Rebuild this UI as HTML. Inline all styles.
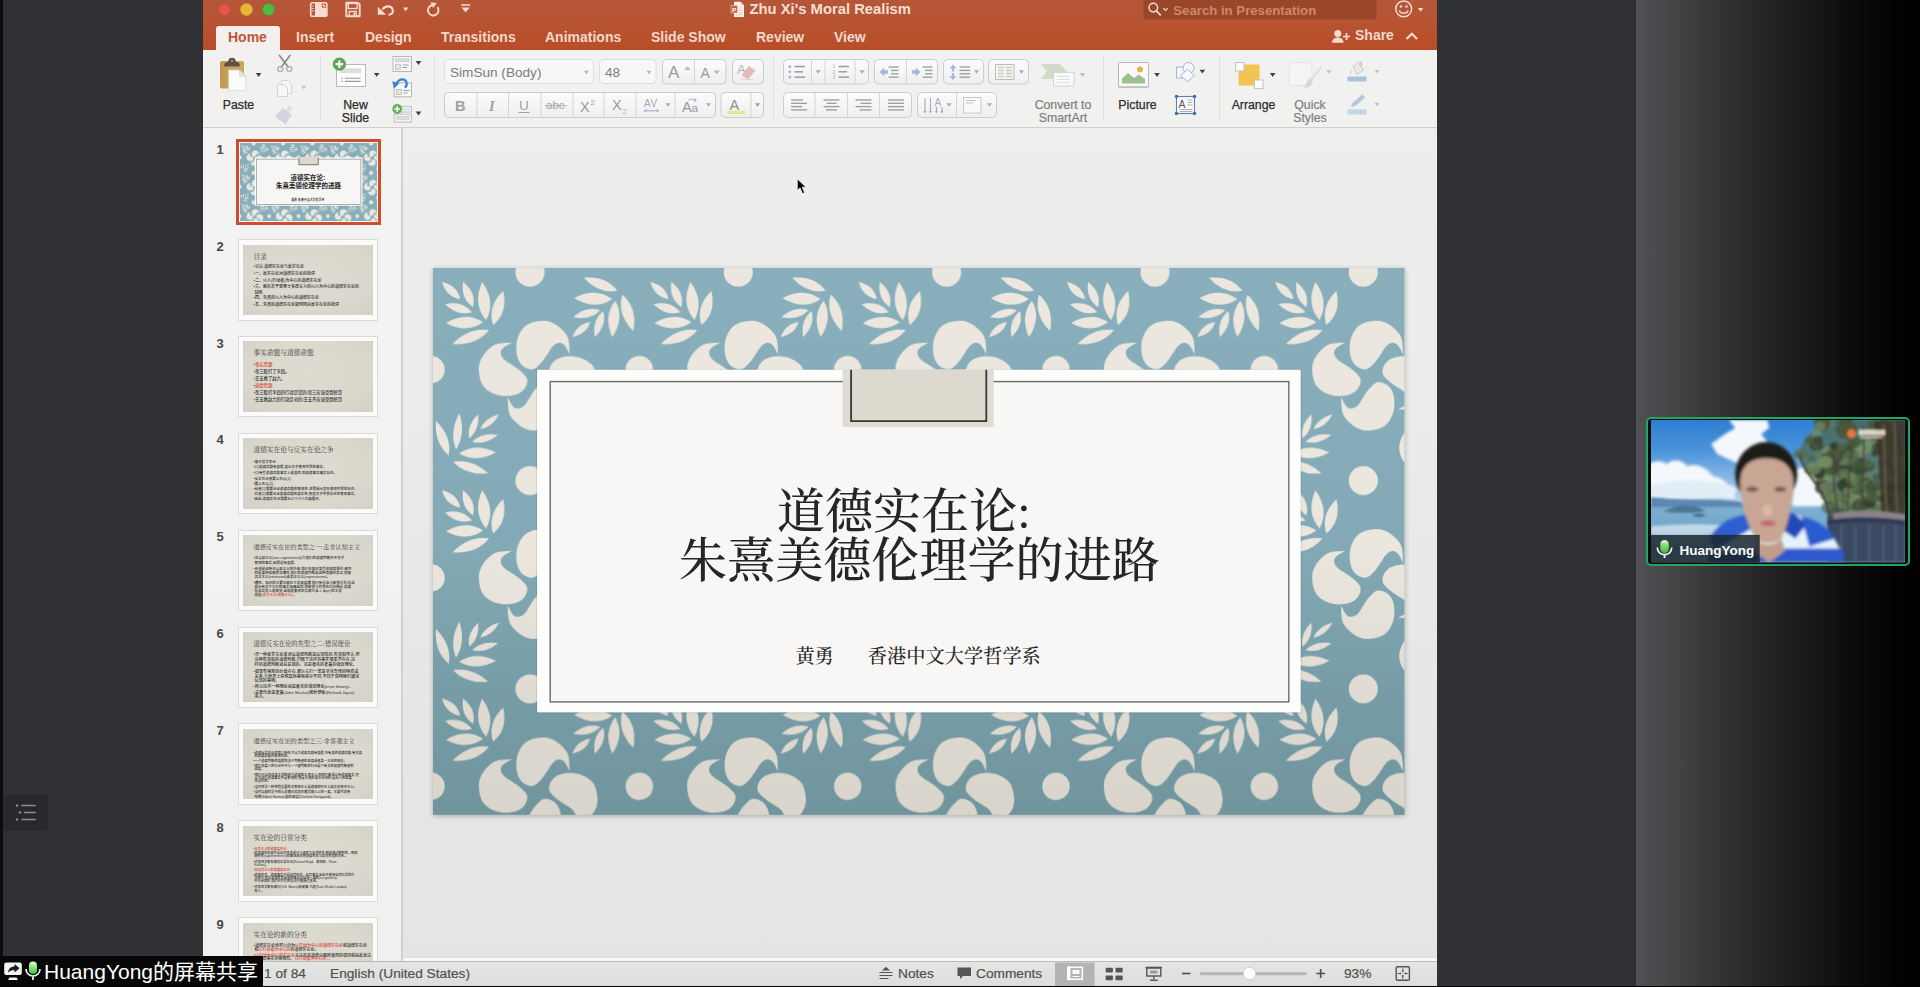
<!DOCTYPE html>
<html lang="zh"><head><meta charset="utf-8"><title>Zhu Xi's Moral Realism</title>
<style>

*{box-sizing:border-box;margin:0;padding:0}
html,body{width:1920px;height:987px;overflow:hidden;background:#2f3134;font-family:"Liberation Sans","Noto Sans CJK SC",sans-serif;}
.a{position:absolute}
#leftbg{position:absolute;left:0;top:0;width:3px;height:987px;background:#0c0c0d}
#rightbg{position:absolute;left:1635.5px;top:0;width:284.5px;height:987px;background:linear-gradient(90deg,#505154 0%,#424345 15.5%,#323234 30.6%,#242425 46%,#181818 61%,#0c0c0c 76%,#020202 92%,#000 100%)}
#ppt{position:absolute;left:0;top:0;width:1920px;height:987px}
#win{position:absolute;left:202.6px;top:0;width:1234.1px;height:987px;background:#ececec}
#tbar{position:absolute;left:202.6px;top:0;width:1234.1px;height:50px;background:linear-gradient(180deg,#b5573a 0%,#b7522f 55%,#b94d29 100%)}
.tl{position:absolute;top:3px;width:13px;height:13px;border-radius:50%}
#title{position:absolute;left:749.5px;top:1px;font-weight:bold;font-size:14.8px;color:#f6dfd5;letter-spacing:0px;white-space:nowrap}
.tab{position:absolute;top:29px;font-weight:bold;font-size:14px;color:#f3d8cc;white-space:nowrap}
#hometab{position:absolute;left:216px;top:26px;width:64px;height:25px;background:#f3f0ee;border-radius:3px 3px 0 0}
#ribbon{position:absolute;left:202.6px;top:49.5px;width:1234.1px;height:78.5px;background:#f1f1f0;border-bottom:1px solid #cfcfcf;box-shadow:0 1px 2px rgba(0,0,0,.08)}
.rl{position:absolute;font-size:12.3px;margin-top:0.7px;color:#2c2c2c;white-space:nowrap;text-align:center;line-height:13px;-webkit-text-stroke:0.25px #2c2c2c}
.rlg{color:#7d7d7d;-webkit-text-stroke:0.2px #7d7d7d}
.vsep{position:absolute;top:56px;width:1px;height:64px;background:#dcdcdc}
.btn{position:absolute;background:linear-gradient(180deg,#fbfbfb,#efefef);border:1px solid #cfcfcf;border-radius:4px}
.bdv{position:absolute;width:1px;background:#d4d4d4;top:0;bottom:0}
.inp{position:absolute;background:#f7f7f7;border:1px solid #dedede;border-radius:4px;font-size:13px;color:#7a7a7a;line-height:22px;padding-left:5px;white-space:nowrap}
.dd{position:absolute;width:0;height:0;border-left:3.5px solid transparent;border-right:3.5px solid transparent;border-top:5px solid #3a3a3a}
.ddg{border-top-color:#aaa}
#panel{position:absolute;left:202.6px;top:128px;width:198.4px;height:834px;background:linear-gradient(180deg,#f3f3f3,#f0f0ef)}
#pdiv{position:absolute;left:400.5px;top:128px;width:2px;height:834px;background:#d0d0d0}
.num{position:absolute;left:212px;width:16px;text-align:center;font-weight:bold;font-size:13px;color:#484848}
.thf{position:absolute;left:238.3px;width:140px;height:81.6px;background:#fbfbfb;border:1px solid #d9d9d9}
.ths{position:absolute;left:4.2px;top:4.6px;width:129.4px;height:70.4px;background:radial-gradient(ellipse at 50% 45%,#dedbd1 0%,#dbd8ce 60%,#d3d0c7 100%);overflow:hidden;font-family:"Liberation Serif","Noto Serif CJK SC",serif;color:#2a2a2a}
.tht{position:absolute;left:10px;top:7px;line-height:10px;font-size:6.7px;white-space:nowrap;color:#3a3a3a}
.thb{position:absolute;left:10px;font-size:3.6px;line-height:6px;height:6px;color:#2b2b2b;white-space:nowrap;font-family:"Liberation Sans","Noto Sans CJK SC",sans-serif;font-weight:500}
.red{color:#d9362b}
#stage{position:absolute;left:402.5px;top:128px;width:1034.2px;height:834px;background:linear-gradient(180deg,#eeeeed 0%,#ececeb 30%,#e6e6e4 75%,#e4e4e2 100%)}
#status{position:absolute;left:202.6px;top:960.5px;width:1234.1px;height:25.3px;background:linear-gradient(180deg,#e5e5e4,#dddddc);border-top:1px solid #b9b9b9;border-radius:0 0 4px 4px}
.st{position:absolute;top:966px;font-size:13.7px;line-height:16px;color:#505050;white-space:nowrap;-webkit-text-stroke:0.2px #505050}

</style></head>
<body>
<svg width="0" height="0" style="position:absolute"><defs>
<pattern id="pat" width="208" height="208" patternUnits="userSpaceOnUse"><g fill="#ebe7de">
<path d="M9.0 14.0Q13.4 29.2 27.0 31.0Q24.4 17.5 9.0 14.0ZM30.0 14.0Q27.6 30.9 40.0 39.0Q43.4 24.6 30.0 14.0ZM49.0 14.0Q39.3 36.2 53.0 52.0Q63.1 33.6 49.0 14.0ZM70.0 23.0Q53.9 38.6 60.0 57.0Q75.1 44.8 70.0 23.0ZM12.0 36.0Q24.4 48.5 39.0 44.0Q29.3 32.3 12.0 36.0ZM13.0 55.0Q33.7 65.9 50.0 54.0Q33.0 43.0 13.0 55.0ZM19.5 76.0Q43.2 77.6 56.0 62.0Q36.0 59.0 19.5 76.0Z"/>
<path d="M150.6 9.7Q165.3 26.2 184.0 22.7Q172.6 7.5 150.6 9.7ZM141.0 30.0Q161.6 42.5 179.0 31.0Q162.2 18.6 141.0 30.0ZM140.0 49.0Q156.9 52.9 167.0 42.0Q152.8 37.4 140.0 49.0ZM139.0 69.0Q153.4 66.1 157.0 54.0Q144.4 55.4 139.0 69.0ZM161.5 69.0Q173.8 57.2 170.0 43.0Q158.6 52.2 161.5 69.0ZM179.0 69.0Q191.6 49.8 182.0 32.5Q169.7 48.0 179.0 69.0ZM200.0 63.0Q204.5 39.8 189.0 26.5Q183.4 46.1 200.0 63.0Z"/>
<path d="M3.0 152.4Q1.1 174.7 15.8 187.0Q18.9 168.1 3.0 152.4ZM26.3 145.0Q16.0 164.0 23.0 181.0Q32.9 165.6 26.3 145.0ZM45.0 146.0Q33.5 156.7 36.0 170.0Q46.6 161.7 45.0 146.0ZM66.0 146.0Q51.8 149.5 47.0 161.0Q59.3 159.0 66.0 146.0ZM65.0 166.5Q48.9 163.6 39.0 173.5Q52.5 177.1 65.0 166.5ZM63.0 184.0Q42.4 174.1 26.0 185.0Q42.9 195.0 63.0 184.0ZM55.0 205.0Q38.6 190.1 20.0 193.5Q32.9 207.2 55.0 205.0Z"/>
<path d="M140.0 161.0Q126.7 178.2 137.5 194.0Q150.6 180.1 140.0 161.0Z"/>
<path transform="translate(105.5 107.5) rotate(0)" d="M31.0 -21.5C30.6 -24.5 31.2 -34.3 28.5 -39.5C25.8 -44.7 19.2 -50.0 14.5 -52.5C9.8 -55.0 5.2 -55.0 0.5 -54.5C-4.2 -54.0 -9.8 -52.7 -13.5 -49.5C-17.2 -46.3 -20.2 -40.5 -21.5 -35.5C-22.8 -30.5 -22.5 -23.8 -21.5 -19.5C-20.5 -15.2 -18.2 -11.7 -15.5 -9.5C-12.8 -7.3 -8.6 -5.9 -5.5 -6.5C-2.5 -7.1 0.5 -10.8 2.8 -13.2C5.1 -15.6 6.7 -18.4 8.3 -20.8C9.9 -23.2 11.1 -25.7 12.5 -27.5C13.9 -29.3 15.3 -30.8 16.9 -31.7C18.5 -32.6 20.7 -33.1 22.3 -32.7C23.9 -32.3 25.1 -31.4 26.5 -29.5C27.9 -27.6 30.2 -22.8 31.0 -21.5Z"/>
<path transform="translate(100.5 105.5) rotate(-90)" d="M31.0 -21.5C30.6 -24.5 31.2 -34.3 28.5 -39.5C25.8 -44.7 19.2 -50.0 14.5 -52.5C9.8 -55.0 5.2 -55.0 0.5 -54.5C-4.2 -54.0 -9.8 -52.7 -13.5 -49.5C-17.2 -46.3 -20.2 -40.5 -21.5 -35.5C-22.8 -30.5 -22.5 -23.8 -21.5 -19.5C-20.5 -15.2 -18.2 -11.7 -15.5 -9.5C-12.8 -7.3 -8.6 -5.9 -5.5 -6.5C-2.5 -7.1 0.5 -10.8 2.8 -13.2C5.1 -15.6 6.7 -18.4 8.3 -20.8C9.9 -23.2 11.1 -25.7 12.5 -27.5C13.9 -29.3 15.3 -30.8 16.9 -31.7C18.5 -32.6 20.7 -33.1 22.3 -32.7C23.9 -32.3 25.1 -31.4 26.5 -29.5C27.9 -27.6 30.2 -22.8 31.0 -21.5Z"/>
<path transform="translate(105.5 107.5) rotate(180)" d="M31.0 -21.5C30.6 -24.5 31.2 -34.3 28.5 -39.5C25.8 -44.7 19.2 -50.0 14.5 -52.5C9.8 -55.0 5.2 -55.0 0.5 -54.5C-4.2 -54.0 -9.8 -52.7 -13.5 -49.5C-17.2 -46.3 -20.2 -40.5 -21.5 -35.5C-22.8 -30.5 -22.5 -23.8 -21.5 -19.5C-20.5 -15.2 -18.2 -11.7 -15.5 -9.5C-12.8 -7.3 -8.6 -5.9 -5.5 -6.5C-2.5 -7.1 0.5 -10.8 2.8 -13.2C5.1 -15.6 6.7 -18.4 8.3 -20.8C9.9 -23.2 11.1 -25.7 12.5 -27.5C13.9 -29.3 15.3 -30.8 16.9 -31.7C18.5 -32.6 20.7 -33.1 22.3 -32.7C23.9 -32.3 25.1 -31.4 26.5 -29.5C27.9 -27.6 30.2 -22.8 31.0 -21.5Z"/>
<path transform="translate(109.5 110.5) rotate(90)" d="M31.0 -21.5C30.6 -24.5 31.2 -34.3 28.5 -39.5C25.8 -44.7 19.2 -50.0 14.5 -52.5C9.8 -55.0 5.2 -55.0 0.5 -54.5C-4.2 -54.0 -9.8 -52.7 -13.5 -49.5C-17.2 -46.3 -20.2 -40.5 -21.5 -35.5C-22.8 -30.5 -22.5 -23.8 -21.5 -19.5C-20.5 -15.2 -18.2 -11.7 -15.5 -9.5C-12.8 -7.3 -8.6 -5.9 -5.5 -6.5C-2.5 -7.1 0.5 -10.8 2.8 -13.2C5.1 -15.6 6.7 -18.4 8.3 -20.8C9.9 -23.2 11.1 -25.7 12.5 -27.5C13.9 -29.3 15.3 -30.8 16.9 -31.7C18.5 -32.6 20.7 -33.1 22.3 -32.7C23.9 -32.3 25.1 -31.4 26.5 -29.5C27.9 -27.6 30.2 -22.8 31.0 -21.5Z"/>
<circle cx="96.8" cy="4.2" r="14.5"/>
<circle cx="96.8" cy="212.2" r="14.5"/>
<circle cx="206.0" cy="101.5" r="13.7"/>
<circle cx="-2.0" cy="101.5" r="13.7"/>
</g></pattern>
</defs></svg>
<div id="leftbg"></div>
<div id="rightbg"></div>
<div id="ppt">

<div id="win"></div>
<div id="tbar"></div>
<div class="tl" style="left:218px;background:#e2574b;border:0.5px solid #c9463b"></div>
<div class="tl" style="left:240px;background:#e9b43a;border:0.5px solid #cf9a2b"></div>
<div class="tl" style="left:262px;background:#55b845;border:0.5px solid #3f9c33"></div>
<div id="title">Zhu Xi's Moral Realism</div>
<svg class="a" style="left:203px;top:0" width="1233" height="50" viewBox="203 0 1233 50">
<rect x="310.700" y="2.800" width="16.200" height="13.400" rx="1.800" fill="none" stroke="#f6dbd0" stroke-width="1.600"/>
<path d="M315 3h7.500l4 4v9h-11.500z" fill="#f6dbd0"/><path d="M322.300 3.200v4h4" fill="none" stroke="#b7532f" stroke-width="1"/>
<path d="M311.800 6h2M311.800 8.500h2M311.800 11h2" stroke="#f6dbd0" stroke-width="0.900"/>
<path d="M346.300 2.800h11.800l1.600 1.600v11.800h-13.400z" fill="none" stroke="#f6dbd0" stroke-width="1.900" stroke-linejoin="round"/>
<rect x="348.300" y="3.500" width="8.800" height="5" fill="none" stroke="#f6dbd0" stroke-width="1.300"/><path d="M349.300 16v-4.500h7v4.500" fill="none" stroke="#f6dbd0" stroke-width="1.400"/><rect x="353.300" y="12.600" width="2" height="3" fill="#f6dbd0"/>
<path d="M382.500 9.500c2.500-4.300 9.500-4.300 10.300 0.800c0.400 2.800-1.500 4.300-4.300 4.500" fill="none" stroke="#f6dbd0" stroke-width="2.100"/><path d="M377.800 6.800v8h8.300z" fill="#f6dbd0"/>
<path d="M403.0 7.6h5.4l-2.7 3.6z" fill="#f6dbd0"/>
<path d="M433.800 5.200a5.300 5.300 0 1 0 4.400 3.300" fill="none" stroke="#f6dbd0" stroke-width="1.900" transform="rotate(-14 432.300 10.500)"/><path d="M430.500 2.300l6.300 0.600l-3.700 5z" fill="#f6dbd0"/>
<path d="M461 5h9.200" stroke="#f6dbd0" stroke-width="1.500"/><path d="M461.4 7.6h8.4l-4.2 4.6z" fill="#f6dbd0"/>
<path d="M734 1.800h6.500l3.500 3.500v11.700h-10z" fill="#fbf3ee"/><path d="M740.500 1.800v3.500h3.500z" fill="#e9cdbf"/><rect x="731" y="5.500" width="6.500" height="7.500" fill="#cc5a36" stroke="#f6dbd0" stroke-width="0.500"/><path d="M738.500 8h4M738.500 10.500h4M738.500 13h4M735.500 15h7" stroke="#d9b9a9" stroke-width="0.800"/>
<text x="732.300" y="11.800" font-family="'Liberation Sans',sans-serif" font-size="6" font-weight="bold" fill="#fff">P</text>
<rect x="1143.500" y="-3" width="233" height="22.500" rx="3.500" fill="#974528" opacity="0.900"/>
<circle cx="1153.300" cy="7.600" r="4.300" fill="none" stroke="#f6dbd0" stroke-width="1.500"/><path d="M1156.300 10.900l4.400 4.400" stroke="#f6dbd0" stroke-width="1.700"/><path d="M1163.300 8.200l2.200 2.200l2.200-2.200" fill="none" stroke="#f6dbd0" stroke-width="1.200"/>
<text x="1173.300" y="14.700" font-family="'Liberation Sans',sans-serif" font-size="13.200" font-weight="bold" fill="#cf886b">Search in Presentation</text>
<circle cx="1403.700" cy="8.900" r="7.900" fill="none" stroke="#f6dbd0" stroke-width="1.500"/><circle cx="1400.900" cy="6.500" r="1.200" fill="#f6dbd0"/><circle cx="1406.500" cy="6.500" r="1.200" fill="#f6dbd0"/><path d="M1399.200 10.500c1.500 3.700 7.500 3.700 9 0" fill="none" stroke="#f6dbd0" stroke-width="1.400"/>
<path d="M1417.9 7.9h5.4l-2.7 3.6z" fill="#f6dbd0"/>
<circle cx="1337.800" cy="33.500" r="3.500" fill="#f6dbd0"/><path d="M1332 42.800c0-7 11.600-7 11.600 0z" fill="#f6dbd0"/><path d="M1346.500 33v7M1343 36.500h7" stroke="#f6dbd0" stroke-width="1.700"/>
<path d="M1406.500 39l5.300-5.300l5.300 5.300" fill="none" stroke="#f6dbd0" stroke-width="2.200"/>
</svg>

<div id="hometab"></div>
<div class="tab" style="left:228px;color:#c25338">Home</div>
<div class="tab" style="left:296px">Insert</div>
<div class="tab" style="left:365px">Design</div>
<div class="tab" style="left:441px">Transitions</div>
<div class="tab" style="left:545px">Animations</div>
<div class="tab" style="left:651px">Slide Show</div>
<div class="tab" style="left:756px">Review</div>
<div class="tab" style="left:834px">View</div>
<div class="tab" style="left:1355px;top:27px">Share</div>

<div id="ribbon"></div><svg class="a" style="left:203px;top:50px" width="1233" height="78" viewBox="203 50 1233 78">
<defs><linearGradient id="bg1" x1="0" y1="0" x2="0" y2="1"><stop offset="0" stop-color="#fcfcfc"/><stop offset="1" stop-color="#eeeeee"/></linearGradient><linearGradient id="gold" x1="0" y1="0" x2="1" y2="0"><stop offset="0" stop-color="#c3954f"/><stop offset="0.5" stop-color="#cda65f"/><stop offset="1" stop-color="#c9a461"/></linearGradient></defs>
<rect x="220" y="61" width="24" height="27.5" rx="2" fill="url(#gold)"/>
<path d="M224.5 66.5c-1-3 1-4.5 3.5-4.5c0-2.8 1.8-4.3 4-4.3s4 1.500 4 4.300c2.500 0 4.500 1.500 3.500 4.500z" fill="#5e514c"/><circle cx="232" cy="60.800" r="1.100" fill="#c9a05c"/>
<path d="M228.500 70h11l6.300 6.300v14.300h-17.300z" fill="#fbfbfa" stroke="#cfcfcf" stroke-width="0.600"/><path d="M239.500 70v6.300h6.300z" fill="#e4e4e4" stroke="#cfcfcf" stroke-width="0.500"/>
<path d="M255.8 73.1h5.6l-2.8 3.8z" fill="#404040"/>
<g stroke="#8b8b8b" stroke-width="1.700" fill="none" stroke-linecap="round"><path d="M279.500 55.500L288.300 67.200"/><path d="M290 55.500L281.200 67.200"/></g>
<g stroke="#b3b5c6" stroke-width="1.500" fill="none"><circle cx="280.300" cy="69" r="2.500"/><circle cx="289.300" cy="69" r="2.500"/></g>
<g fill="#f6f6f6" stroke="#d4d4d4" stroke-width="1"><path d="M281.500 80.500h6.500l3.500 3.500v9.500h-10z"/><path d="M277.500 84.500h6.500l3.500 3.500v8.500h-10z"/></g>
<path d="M301.1 85.9h5.4l-2.7 3.6z" fill="#c4c4c4"/>
<g transform="rotate(38 285 114)"><rect x="283" y="104" width="4.500" height="7" rx="1.200" fill="#e0e0e0"/><rect x="279.500" y="110.500" width="11.500" height="3.500" fill="#d6d6da"/><path d="M279.500 114h11.500l1 8h-13.500z" fill="#d2d2e2"/></g>
<path d="M320.500 56V120" stroke="#e2e2e2"/>
<rect x="336.500" y="64.500" width="29" height="22" fill="#fcfcfc" stroke="#b9b9b9"/>
<rect x="340.500" y="68.300" width="20.500" height="4.800" fill="#d9dee1"/>
<path d="M345 78.200h15.500M345 81.400h15.500" stroke="#9a9a9a" stroke-width="1.100"/><path d="M341.200 78.200h1.600M341.200 81.400h1.600" stroke="#9a9a9a" stroke-width="1.100"/>
<circle cx="339.400" cy="64.200" r="6.600" fill="#5da655"/><path d="M339.400 60.400v7.600M335.600 64.200h7.600" stroke="#f4faf3" stroke-width="2.200"/>
<path d="M373.9 72.9h5.6l-2.8 3.8z" fill="#404040"/>
<rect x="393" y="56.500" width="18.500" height="15" fill="#f8f8f8" stroke="#b5b5b5"/><rect x="395.500" y="58.800" width="13.500" height="3" fill="#dcdcdc" stroke="#bdbdbd" stroke-width="0.600"/><rect x="395.500" y="64.200" width="5" height="5" fill="#e4e4e4" stroke="#b5b5b5" stroke-width="0.700"/><path d="M402.500 65h6M402.500 67.500h4.500" stroke="#9c9c9c" stroke-width="1"/>
<path d="M415.7 61.1h5.6l-2.8 3.8z" fill="#404040"/>
<rect x="394.200" y="82.800" width="17.300" height="14" fill="#f8f8f8" stroke="#b5b5b5"/><rect x="396.500" y="89.500" width="5" height="5" fill="#e4e4e4" stroke="#b5b5b5" stroke-width="0.700"/><path d="M403.500 90.500h6M403.500 93h4" stroke="#9c9c9c" stroke-width="1"/>
<path d="M404.800 87.500c3.500-2.500 2-8.200-2.500-8.200c-3 0-5 2.200-6.300 5" fill="none" stroke="#3f7fd3" stroke-width="2.200"/><path d="M392.300 81.200l7.200 2.200l-5.600 5.200z" fill="#3f7fd3"/>
<rect x="397" y="106.400" width="14.500" height="5.600" fill="#f4f4f4" stroke="#c0c0c0"/><rect x="402" y="108" width="8" height="2.200" fill="#d7dfe8"/><rect x="394.200" y="114.200" width="17.300" height="8" fill="#f4f4f4" stroke="#bdbdbd"/><rect x="396.500" y="116.300" width="12.500" height="3" fill="#dcdcdc" stroke="#c4c4c4" stroke-width="0.500"/>
<circle cx="397.200" cy="109" r="4.900" fill="#6aad5e"/><path d="M397.200 106.200v5.600M394.400 109h5.600" stroke="#f4faf3" stroke-width="1.700"/>
<path d="M415.7 111.6h5.6l-2.8 3.8z" fill="#404040"/>
<path d="M434.500 56V120" stroke="#e2e2e2"/>
<rect x="444.500" y="59.500" width="149" height="24" rx="4" fill="#f7f7f7" stroke="#dedede"/>
<rect x="599.500" y="59.500" width="56.500" height="24" rx="4" fill="#f7f7f7" stroke="#dedede"/>
<path d="M584.0 70.8h5l-2.5 3.4z" fill="#b4b4b4"/>
<path d="M646.5 70.8h5l-2.5 3.4z" fill="#b4b4b4"/>
<rect x="662.5" y="59.5" width="63.5" height="24.5" rx="4" fill="url(#bg1)" stroke="#cdcdcd" stroke-width="1"/><path d="M694.5 60.0V83.5" stroke="#d6d6d6" stroke-width="1"/>
<rect x="732.5" y="59.5" width="31.0" height="24.5" rx="4" fill="url(#bg1)" stroke="#cdcdcd" stroke-width="1"/>
<rect x="444.5" y="92.5" width="271.0" height="25.0" rx="4" fill="url(#bg1)" stroke="#cdcdcd" stroke-width="1"/><path d="M477 93.0V117.0" stroke="#d6d6d6" stroke-width="1"/><path d="M508.5 93.0V117.0" stroke="#d6d6d6" stroke-width="1"/><path d="M541 93.0V117.0" stroke="#d6d6d6" stroke-width="1"/><path d="M573 93.0V117.0" stroke="#d6d6d6" stroke-width="1"/><path d="M604 93.0V117.0" stroke="#d6d6d6" stroke-width="1"/><path d="M636 93.0V117.0" stroke="#d6d6d6" stroke-width="1"/><path d="M675 93.0V117.0" stroke="#d6d6d6" stroke-width="1"/>
<rect x="721" y="92.5" width="42.5" height="25.0" rx="4" fill="url(#bg1)" stroke="#cdcdcd" stroke-width="1"/><path d="M751 93.0V117.0" stroke="#d6d6d6" stroke-width="1"/>
<g font-family="'Liberation Sans',sans-serif" fill="#9a9a9a">
<text x="450" y="76.500" font-size="13.600" fill="#7c7c7c">SimSun (Body)</text>
<text x="605" y="76.500" font-size="13.600" fill="#7c7c7c">48</text>
<text x="668" y="78" font-size="17">A</text><text x="700.500" y="78" font-size="14">A</text>
<text x="737" y="74" font-size="13" fill="#b0b0b0">A</text>
<text x="455" y="110.500" font-size="14.500" font-weight="bold" fill="#a0a0a0">B</text>
<text x="489" y="110.500" font-size="14.500" font-style="italic" font-family="'Liberation Serif',serif" font-weight="bold" fill="#a0a0a0">I</text>
<text x="519" y="110" font-size="13.500" fill="#a0a0a0">U</text><path d="M518.500 112.500h11" stroke="#a0a0a0" stroke-width="1"/>
<text x="546" y="109" font-size="11.500" fill="#a8a8a8">abc</text><path d="M545 105.700h22" stroke="#a8a8a8" stroke-width="0.900"/>
<text x="580" y="111.500" font-size="14.500">X</text><text x="590.500" y="105" font-size="7.500">2</text>
<text x="612" y="109.500" font-size="14.500">X</text><text x="622.500" y="113.500" font-size="7.500" fill="#a9b1cf">2</text>
<text x="644" y="106.500" font-size="10" letter-spacing="0.500" fill="#a8a8a8">AV</text>
<text x="682" y="112" font-size="14.500">A</text><text x="691.500" y="112" font-size="11.500">a</text>
<text x="729.500" y="110" font-size="14.500" fill="#8e8e8e">A</text>
</g>
<path d="M684.300 70l3.300-3.800l3.300 3.800z" fill="#b9b5d0"/><path d="M713.500 70.500l3.300 3.800l3.300-3.800z" fill="#b9b5d0"/>
<path d="M748 66l7 3.500l-6 10l-7-3.500z" fill="#e3b4b6" opacity="0.900" transform="rotate(8 748 72)"/><path d="M741 79.500h12" stroke="#d9d9d9" stroke-width="1"/>
<path d="M644 110.800h15" stroke="#a9b6dc" stroke-width="1.200"/><path d="M643.500 110.800l2.800-1.800v3.600zM659.500 110.800l-2.800-1.800v3.600z" fill="#a9b6dc"/>
<path d="M665.5 103.3h5l-2.5 3.4z" fill="#ababab"/>
<path d="M706.0 103.3h5l-2.5 3.4z" fill="#ababab"/>
<path d="M755.0 103.3h5l-2.5 3.4z" fill="#9a9a9a"/>
<path d="M688.500 100.500c2-2 5-2 6.500 0" fill="none" stroke="#aab0cf" stroke-width="1.200"/><path d="M696 98l0.500 3.800l-3.500-0.800z" fill="#aab0cf"/>
<rect x="727.500" y="110.800" width="17.500" height="3.200" fill="#e9e68f"/>
<path d="M773.500 56V120" stroke="#e2e2e2"/>
<rect x="783.5" y="59.5" width="85.0" height="24.5" rx="4" fill="url(#bg1)" stroke="#cdcdcd" stroke-width="1"/><path d="M811.5 60.0V83.5" stroke="#d6d6d6" stroke-width="1"/><path d="M825 60.0V83.5" stroke="#d6d6d6" stroke-width="1"/><path d="M855 60.0V83.5" stroke="#d6d6d6" stroke-width="1"/>
<rect x="874.5" y="59.5" width="63.0" height="24.5" rx="4" fill="url(#bg1)" stroke="#cdcdcd" stroke-width="1"/><path d="M906.5 60.0V83.5" stroke="#d6d6d6" stroke-width="1"/>
<rect x="943.5" y="59.5" width="40.0" height="24.5" rx="4" fill="url(#bg1)" stroke="#cdcdcd" stroke-width="1"/>
<rect x="988.5" y="59.5" width="40.0" height="24.5" rx="4" fill="url(#bg1)" stroke="#cdcdcd" stroke-width="1"/>
<rect x="783.5" y="92.5" width="128.0" height="25.0" rx="4" fill="url(#bg1)" stroke="#cdcdcd" stroke-width="1"/><path d="M815 93.0V117.0" stroke="#d6d6d6" stroke-width="1"/><path d="M847.5 93.0V117.0" stroke="#d6d6d6" stroke-width="1"/><path d="M879.5 93.0V117.0" stroke="#d6d6d6" stroke-width="1"/>
<rect x="917.5" y="92.5" width="79.0" height="25.0" rx="4" fill="url(#bg1)" stroke="#cdcdcd" stroke-width="1"/><path d="M956.5 93.0V117.0" stroke="#d6d6d6" stroke-width="1"/>
<circle cx="789.800" cy="66.5" r="1.500" fill="#b4b4dc"/>
<circle cx="789.800" cy="71.8" r="1.500" fill="#b4b4dc"/>
<circle cx="789.800" cy="77.1" r="1.500" fill="#b4b4dc"/>
<path d="M794.5 66.5h10.5" stroke="#999" stroke-width="1.5"/><path d="M794.5 71.8h8.5" stroke="#999" stroke-width="1.5"/><path d="M794.5 77.1h10.5" stroke="#999" stroke-width="1.5"/>
<path d="M815.7 70.3h5l-2.5 3.4z" fill="#ababab"/>
<path d="M859.5 70.3h5l-2.5 3.4z" fill="#ababab"/>
<g font-family="'Liberation Sans',sans-serif" font-size="5" fill="#a5a9c8"><text x="832.500" y="68">1</text><text x="832.500" y="73.500">2</text><text x="832.500" y="79">3</text></g>
<path d="M838.5 66.5h10.5" stroke="#999" stroke-width="1.5"/><path d="M838.5 71.8h8.5" stroke="#999" stroke-width="1.5"/><path d="M838.5 77.1h10.5" stroke="#999" stroke-width="1.5"/>
<path d="M879.500 72l4.800-4.500v2.700h3.600v3.600h-3.600v2.700z" fill="#a9b5e2"/>
<path d="M888.5 67.0h10" stroke="#9b9b9b" stroke-width="1.3"/><path d="M891.0 70.4h7.5" stroke="#9b9b9b" stroke-width="1.3"/><path d="M891.0 73.8h7.5" stroke="#9b9b9b" stroke-width="1.3"/><path d="M888.5 77.2h10" stroke="#9b9b9b" stroke-width="1.3"/>
<path d="M920.500 72l-4.800-4.500v2.700h-3.600v3.600h3.600v2.700z" fill="#a9b5e2"/>
<path d="M922.5 67.0h10" stroke="#9b9b9b" stroke-width="1.3"/><path d="M925.0 70.4h7.5" stroke="#9b9b9b" stroke-width="1.3"/><path d="M925.0 73.8h7.5" stroke="#9b9b9b" stroke-width="1.3"/><path d="M922.5 77.2h10" stroke="#9b9b9b" stroke-width="1.3"/>
<path d="M953 64.500l3.500 4h-2.400v3h-2.200v-3h-2.400zM953 80l3.500-4h-2.400v-3h-2.200v3h-2.400z" fill="#a9b5e2"/>
<path d="M959.5 67.0h10.5" stroke="#9b9b9b" stroke-width="1.3"/><path d="M959.5 70.4h10.5" stroke="#9b9b9b" stroke-width="1.3"/><path d="M959.5 73.8h10.5" stroke="#9b9b9b" stroke-width="1.3"/><path d="M959.5 77.2h10.5" stroke="#9b9b9b" stroke-width="1.3"/>
<path d="M974.0 70.3h5l-2.5 3.4z" fill="#ababab"/>
<rect x="995.500" y="64.500" width="18.500" height="15" fill="#f3f5f0" stroke="#bdbdbd"/>
<path d="M998 67.5h6M1006 67.5h6" stroke="#c5d2bd" stroke-width="1.300"/>
<path d="M998 70.5h6M1006 70.5h6" stroke="#c5d2bd" stroke-width="1.300"/>
<path d="M998 73.5h6M1006 73.5h6" stroke="#c5d2bd" stroke-width="1.300"/>
<path d="M998 76.5h6M1006 76.5h6" stroke="#c5d2bd" stroke-width="1.300"/>
<path d="M1019.0 70.3h5l-2.5 3.4z" fill="#ababab"/>
<path d="M791.0 100.0h12" stroke="#9a9a9a" stroke-width="1.3"/><path d="M791.0 103.3h16" stroke="#9a9a9a" stroke-width="1.3"/><path d="M791.0 106.6h11" stroke="#9a9a9a" stroke-width="1.3"/><path d="M791.0 109.9h16" stroke="#9a9a9a" stroke-width="1.3"/>
<path d="M823.5 100.0h16" stroke="#9a9a9a" stroke-width="1.3"/><path d="M826.5 103.3h10" stroke="#9a9a9a" stroke-width="1.3"/><path d="M823.5 106.6h16" stroke="#9a9a9a" stroke-width="1.3"/><path d="M826.0 109.9h11" stroke="#9a9a9a" stroke-width="1.3"/>
<path d="M855.5 100.0h16" stroke="#9a9a9a" stroke-width="1.3"/><path d="M860.5 103.3h11" stroke="#9a9a9a" stroke-width="1.3"/><path d="M855.5 106.6h16" stroke="#9a9a9a" stroke-width="1.3"/><path d="M859.5 109.9h12" stroke="#9a9a9a" stroke-width="1.3"/>
<path d="M888.0 100.0h16" stroke="#9a9a9a" stroke-width="1.3"/><path d="M888.0 103.3h16" stroke="#9a9a9a" stroke-width="1.3"/><path d="M888.0 106.6h16" stroke="#9a9a9a" stroke-width="1.3"/><path d="M888.0 109.9h16" stroke="#9a9a9a" stroke-width="1.3"/>
<g stroke="#a9a9a9" stroke-width="1.100"><path d="M925 98v14M930.500 98v14M936.500 107v5M942 107v5"/></g>
<g fill="#a9a9a9"><path d="M923.500 111h3l-1.500 2.500zM929 111h3l-1.500 2.500zM935 111h3l-1.500 2.500zM940.500 111h3l-1.500 2.500z"/></g>
<text x="934.500" y="105.500" font-family="'Liberation Sans',sans-serif" font-size="10" fill="#a9adc8">A</text>
<path d="M946.5 103.3h5l-2.5 3.4z" fill="#ababab"/>
<rect x="963.500" y="97.500" width="17.500" height="15.500" fill="#fafafa" stroke="#c8c8c8"/><path d="M966 100.500h10M966 103h7" stroke="#c2c2c2" stroke-width="1"/>
<path d="M987.0 103.3h5l-2.5 3.4z" fill="#ababab"/>
<path d="M1041 64h19l6.500 7.500l-6.500 7.500h-19l6-7.500z" fill="#cfdcc8"/><rect x="1053.500" y="72.500" width="20.500" height="13.500" fill="#fafafa" stroke="#d4d4d4"/><path d="M1057 76.500h13M1057 79.500h13M1057 82.500h13" stroke="#dedede" stroke-width="1"/>
<path d="M1080.0 73.3h5l-2.5 3.4z" fill="#b5b5b5"/>
<path d="M1103.500 56V120" stroke="#e2e2e2"/>
<rect x="1118.500" y="62.500" width="30" height="25" rx="1" fill="#fafafa" stroke="#b9b9b9"/><rect x="1118.500" y="86" width="30" height="1.500" fill="#c9c9c9"/>
<path d="M1122 83.500v-5l6-5.500l6 5l4.500-3.500l6.500 4.500v4.500z" fill="#9cc08e"/><circle cx="1140" cy="69.500" r="3" fill="#e4b44c"/>
<path d="M1154.2 73.1h5.6l-2.8 3.8z" fill="#404040"/>
<rect x="1176.500" y="67" width="11" height="11" fill="#f4f6fb" stroke="#a9b3d2"/><circle cx="1188.500" cy="68" r="5.500" fill="#f4f6fb" stroke="#a9b3d2"/><path d="M1187.500 69.500l7 6l-7 6l-7-6z" fill="#f9fafc" stroke="#a9b3d2"/>
<path d="M1199.6 69.7h5.6l-2.8 3.8z" fill="#404040"/>
<rect x="1176.500" y="96.500" width="18" height="17" fill="#fafafa" stroke="#5f7fb5" stroke-width="1.100"/>
<circle cx="1176.5" cy="96.5" r="1.800" fill="#4a6fae"/>
<circle cx="1194.5" cy="96.5" r="1.800" fill="#4a6fae"/>
<circle cx="1176.5" cy="113.5" r="1.800" fill="#4a6fae"/>
<circle cx="1194.5" cy="113.5" r="1.800" fill="#4a6fae"/>
<text x="1178.500" y="107.500" font-family="'Liberation Sans',sans-serif" font-size="10.500" fill="#555">A</text><path d="M1187.500 100h5M1187.500 102.500h5M1187.500 105h5M1179.500 109.500h13M1179.500 111.500h13" stroke="#999" stroke-width="0.800"/>
<path d="M1219.500 56V120" stroke="#e2e2e2"/>
<rect x="1238.500" y="64.500" width="21" height="21" fill="#f2c552"/><rect x="1235.500" y="62.500" width="8.500" height="8.500" fill="#fafafa" stroke="#c4c4c4"/><rect x="1254.500" y="80" width="8.500" height="8.500" fill="#fafafa" stroke="#c4c4c4"/>
<path d="M1269.9 73.1h5.6l-2.8 3.8z" fill="#404040"/>
<rect x="1289" y="62.500" width="23" height="23" rx="3.500" fill="#f4f4f4" stroke="#e2e2e2"/>
<path d="M1320.500 66.500l1.700 1.300l-11.500 14.500l-2.200-1.700z" fill="#e0e0e0"/><path d="M1309 79.500c2.500-0.500 4 1 3.300 3.200c-1 3.500-5 5.500-9 5c2.500-1.500 2.500-3 3-5c0.400-1.700 1.300-2.800 2.700-3.200z" fill="#cbd5e8"/><circle cx="1309.500" cy="81.500" r="2.200" fill="#e8dcae"/>
<path d="M1326.3 70.3h5l-2.5 3.4z" fill="#c0c0c0"/>
<rect x="1347.500" y="76.500" width="19" height="5" fill="#a9c3dd"/><path d="M1353 66l5-3.500l5.500 7.500l-6.500 4.500z" fill="#eaeaea" stroke="#c2c2c2" stroke-width="0.800"/><path d="M1359.500 61.500c2 1 2.500 3 1.500 5" fill="none" stroke="#b8b8b8" stroke-width="1.100"/><path d="M1351.500 70.500c-1 1.500-1.500 2.500-0.500 3.500" stroke="#b9c6dd" fill="none"/>
<path d="M1374.5 69.9h5l-2.5 3.4z" fill="#c0c0c0"/>
<rect x="1347.500" y="109.500" width="19" height="5" fill="#bcd6ea"/><path d="M1351 107l1.500-4l8.500-7.500l3 3l-8.500 7.500z" fill="#b9c3e0"/><path d="M1360.500 95.800l1.800-1.600l3 3l-1.800 1.600z" fill="#c7c7d6"/>
<path d="M1374.5 102.8h5l-2.5 3.4z" fill="#c0c0c0"/>
</svg>
<div class="rl" style="left:218px;top:98px;width:41px">Paste</div>
<div class="rl" style="left:335px;top:98px;width:41px">New<br>Slide</div>
<div class="rl rlg" style="left:1023px;top:98px;width:80px">Convert to<br>SmartArt</div>
<div class="rl" style="left:1107px;top:98px;width:61px">Picture</div>
<div class="rl" style="left:1223px;top:98px;width:61px">Arrange</div>
<div class="rl rlg" style="left:1280px;top:98px;width:60px">Quick<br>Styles</div>

<div id="panel"></div><div id="pdiv"></div>
<div class="num" style="top:141.5px">1</div>
<div class="a" style="left:236px;top:139px;width:145px;height:86px;border:3px solid #c9502e;background:#f3f3f3"></div>
<svg class="a" style="left:240px;top:143px" width="137" height="78" viewBox="0 0 970 552"><rect width="970" height="552" fill="#86adba"/><rect width="970" height="552" fill="url(#pat)"/>
<rect x="105" y="102" width="762" height="342" fill="#fcfcfb"/><rect x="117" y="114" width="739" height="320" fill="#f7f6f4" stroke="#777" stroke-width="4"/>
<rect x="410" y="102" width="151" height="57" fill="#dddcd5"/><path d="M418 102V153H554V102" fill="#ddd9ce" stroke="#555" stroke-width="5"/>
<g text-anchor="middle" font-family="'Liberation Sans','Noto Sans CJK SC',sans-serif" font-weight="bold" fill="#1c1c1c">
<text x="480" y="262" font-size="46">道德实在论:</text>
<text x="485" y="317" font-size="46">朱熹美德伦理学的进路</text>
<text x="480" y="408" font-size="21" fill="#333">黄勇   香港中文大学哲学系</text></g>
</svg>
<div class="num" style="top:238.7px">2</div>
<div class="thf" style="top:239.0px"><div class="ths"><div class="tht" style="font-size:6.7px">目录</div><div class="thb" style="top:19.8px;left:10px;font-size:4.0px;color:#2b2b2b">•引言:道德实在论与反实在论</div><div class="thb" style="top:26.5px;left:10px;font-size:4.0px;color:#2b2b2b">•一、反实在论对道德实在论的批评</div><div class="thb" style="top:33.2px;left:10px;font-size:4.0px;color:#2b2b2b">•二、以人(行动者)为中心的道德实在论</div><div class="thb" style="top:39.7px;left:10px;font-size:4.0px;color:#2b2b2b">•三、解析若干亚里士多德主义的以人为中心的道德实在论的</div><div class="thb" style="top:45.2px;left:10px;font-size:4.0px;color:#2b2b2b">&nbsp;缺陷</div><div class="thb" style="top:50.9px;left:10px;font-size:4.0px;color:#2b2b2b">•四、朱熹的以人为中心的道德实在论</div><div class="thb" style="top:57.4px;left:10px;font-size:4.0px;color:#2b2b2b">•五、朱熹的道德实在论如何回应反实在论的批评</div></div></div>
<div class="num" style="top:335.6px">3</div>
<div class="thf" style="top:335.9px"><div class="ths"><div class="tht" style="font-size:6.7px">事实命题与道德命题</div><div class="thb" style="top:20.3px;left:10px;font-size:4.3px;color:#2b2b2b">•<span class="red">事实命题:</span></div><div class="thb" style="top:27.8px;left:10px;font-size:4.3px;color:#2b2b2b">•张三殴打了李四。</div><div class="thb" style="top:34.9px;left:10px;font-size:4.3px;color:#2b2b2b">•王五救了赵六。</div><div class="thb" style="top:41.6px;left:10px;font-size:4.3px;color:#2b2b2b">•<span class="red">道德命题:</span></div><div class="thb" style="top:48.5px;left:10px;font-size:4.3px;color:#2b2b2b">•张三殴打李四的行动是错的/张三应该受到惩罚</div><div class="thb" style="top:55.8px;left:10px;font-size:4.3px;color:#2b2b2b">•王五救赵六的行动是对的/王五不应该受到惩罚</div></div></div>
<div class="num" style="top:432.4px">4</div>
<div class="thf" style="top:432.7px"><div class="ths"><div class="tht" style="font-size:6.7px">道德实在论与反实在论之争</div><div class="thb" style="top:20.3px;left:10px;font-size:3.5px;color:#2b2b2b">•基本哲学争论:</div><div class="thb" style="top:25.8px;left:10px;font-size:3.5px;color:#2b2b2b">•(1)道德命题有真假,真正关乎客观世界的事实。</div><div class="thb" style="top:31.5px;left:10px;font-size:3.5px;color:#2b2b2b">•(2)有些道德命题事实上是真的,即道德事实确实存在。</div><div class="thb" style="top:37.3px;left:10px;font-size:3.5px;color:#2b2b2b">•反实在论者要么否认(1);</div><div class="thb" style="top:42.6px;left:10px;font-size:3.5px;color:#2b2b2b">•要么否认(2);</div><div class="thb" style="top:48.1px;left:10px;font-size:3.5px;color:#2b2b2b">•前者(1)需要论证道德命题的客观性,进而揭示其在客观世界的存在;</div><div class="thb" style="top:53.2px;left:10px;font-size:3.5px;color:#2b2b2b">&nbsp;后者(2)需要论证道德命题的真实性,即其关乎世界存在的客观事实。</div><div class="thb" style="top:58.2px;left:10px;font-size:3.5px;color:#2b2b2b">•因此,道德实在论需要从以下几个方面展开。</div></div></div>
<div class="num" style="top:529.3px">5</div>
<div class="thf" style="top:529.6px"><div class="ths"><div class="tht" style="font-size:6.15px">道德反实在论的类型之一:&#8202;走非认知主义</div><div class="thb" style="top:20.3px;left:10px;font-size:3.5px;color:#2b2b2b">•非认知主义(non-cognitivism)认为我们的道德判断并不关乎</div><div class="thb" style="top:24.8px;left:10px;font-size:3.5px;color:#2b2b2b">&nbsp;客观的事实,因而没有真假。</div><div class="thb" style="top:30.9px;left:10px;font-size:3.5px;color:#2b2b2b">•休谟是这种非认知主义的先驱:我们在面对某些道德情景时,感到</div><div class="thb" style="top:34.9px;left:10px;font-size:3.5px;color:#2b2b2b">&nbsp;的是某种情感而非理性,我们的道德判断是这种情感的表达;情感</div><div class="thb" style="top:39.0px;left:10px;font-size:3.5px;color:#2b2b2b">&nbsp;表达主义(emotivism)或表达主义(expressivism)。</div><div class="thb" style="top:44.6px;left:10px;font-size:3.5px;color:#2b2b2b">•理性、知识的主要功能在于发现真理,我们有信念与欲望之别,信念</div><div class="thb" style="top:48.7px;left:10px;font-size:3.5px;color:#2b2b2b">&nbsp;是由有关于它们的事实来确定的,而欲望与世界的方向相反;道德</div><div class="thb" style="top:52.8px;left:10px;font-size:3.5px;color:#2b2b2b">&nbsp;信念实质上是欲望,这就是著名的艾耶尔(A.J. Ayer)的主张</div><div class="thb" style="top:56.8px;left:10px;font-size:3.5px;color:#2b2b2b">&nbsp;就是<span class="red">(命令主义/情感主义)</span>。</div></div></div>
<div class="num" style="top:626.2px">6</div>
<div class="thf" style="top:626.5px"><div class="ths"><div class="tht" style="font-size:6.3px">道德反实在论的类型之二:&#8202;错误理论</div><div class="thb" style="top:20.3px;left:10px;font-size:4.1px;color:#2b2b2b">•另一种反实在论者承认道德判断是认知性的,有真假可言,但</div><div class="thb" style="top:25.4px;left:10px;font-size:4.1px;color:#2b2b2b">&nbsp;这种有真假的道德判断,归根于这样的事实根本不存在,这</div><div class="thb" style="top:30.4px;left:10px;font-size:4.1px;color:#2b2b2b">&nbsp;样的道德判断就总是错的。这是著名的麦基的错误理论。</div><div class="thb" style="top:36.5px;left:10px;font-size:4.1px;color:#2b2b2b">•如果有客观的价值存在,那么它们一定是非常奇怪的特质或</div><div class="thb" style="top:41.6px;left:10px;font-size:4.1px;color:#2b2b2b">&nbsp;关系,与世界上任何其他事物完全不同,不同于任何我们通常</div><div class="thb" style="top:46.1px;left:10px;font-size:4.1px;color:#2b2b2b">&nbsp;认知的事物。</div><div class="thb" style="top:52.1px;left:10px;font-size:4.1px;color:#2b2b2b">•所以这样一种理论就是著名的错误理论(error theory)。</div><div class="thb" style="top:57.8px;left:10px;font-size:4.1px;color:#2b2b2b">•主要代表是麦基(John Mackie)和乔伊斯(Richard Joyce)</div><div class="thb" style="top:62.3px;left:10px;font-size:4.1px;color:#2b2b2b">&nbsp;等人。</div></div></div>
<div class="num" style="top:723.1px">7</div>
<div class="thf" style="top:723.4px"><div class="ths"><div class="tht" style="font-size:6.2px">道德反实在论的类型之三:&#8202;非客观主义</div><div class="thb" style="top:20.6px;left:10px;font-size:3.3px;color:#2b2b2b">•道德反实在论的第三种形式认为道德命题有真假,也有真的道德命题,有关真</div><div class="thb" style="top:23.6px;left:10px;font-size:3.3px;color:#2b2b2b">&nbsp;的道德命题的客观性的。</div><div class="thb" style="top:29.4px;left:10px;font-size:3.3px;color:#2b2b2b">•一个道德判断的真假取决于判断者的态度或者某一文化的规范。</div><div class="thb" style="top:34.2px;left:10px;font-size:3.3px;color:#2b2b2b">•我们说某人的行动不对与一个被判断的行动是个有关的道德判断者的</div><div class="thb" style="top:37.0px;left:10px;font-size:3.3px;color:#2b2b2b">&nbsp;态度。</div><div class="thb" style="top:43.1px;left:10px;font-size:3.3px;color:#2b2b2b">•我们可以将这类主张统称为道德的主观主义,即他们都承认有道德事实,但</div><div class="thb" style="top:45.9px;left:10px;font-size:3.3px;color:#2b2b2b">&nbsp;认为这些道德事实不是客观的,而是主观的或主体间的,是由人的态度</div><div class="thb" style="top:48.9px;left:10px;font-size:3.3px;color:#2b2b2b">&nbsp;所决定的。</div><div class="thb" style="top:55.3px;left:10px;font-size:3.3px;color:#2b2b2b">•当代哲学一种特别重要的非客观主义是道德相对主义和文化相对主义。</div><div class="thb" style="top:59.8px;left:10px;font-size:3.3px;color:#2b2b2b">•当代认知科学中的心灵理论及其伦理学意义上的一类。主要代表有</div><div class="thb" style="top:64.9px;left:10px;font-size:3.3px;color:#2b2b2b">&nbsp;哈曼(Gilbert Harman)和科斯嘉(Christine Korsgaard)。</div></div></div>
<div class="num" style="top:819.9px">8</div>
<div class="thf" style="top:820.2px"><div class="ths"><div class="tht" style="font-size:6.7px">实在论的日常分类</div><div class="thb" style="top:19.8px;left:10px;font-size:3.2px;color:#2b2b2b"><span class="red">•自然主义的道德实在论:</span></div><div class="thb" style="top:24.4px;left:10px;font-size:3.2px;color:#2b2b2b">•将道德性质看作是自然性质或可以还原为自然性质,例如通过随附性。例如</div><div class="thb" style="top:27.4px;left:10px;font-size:3.2px;color:#2b2b2b">&nbsp;随附性(supervenience)的概念来说明道德性质与自然性质的关系。</div><div class="thb" style="top:33.2px;left:10px;font-size:3.2px;color:#2b2b2b">•代表哲学家有康奈尔实在论(Richard Boyd、斯特金、Peter</div><div class="thb" style="top:36.5px;left:10px;font-size:3.2px;color:#2b2b2b">&nbsp;Railton)。</div><div class="thb" style="top:41.6px;left:10px;font-size:3.2px;color:#2b2b2b"><span class="red">•非自然主义的道德实在论:</span></div><div class="thb" style="top:46.6px;left:10px;font-size:3.2px;color:#2b2b2b">•道德性质、道德事实不是自然性质、自然事实,因此不能用自然科学的方</div><div class="thb" style="top:49.7px;left:10px;font-size:3.2px;color:#2b2b2b">&nbsp;法研究;而且道德性质和道德事实是自成一类的(sui generis),</div><div class="thb" style="top:52.7px;left:10px;font-size:3.2px;color:#2b2b2b">&nbsp;不可还原的,我们对它们的认识只能通过直觉。</div><div class="thb" style="top:58.6px;left:10px;font-size:3.2px;color:#2b2b2b">•代表哲学家有摩尔(G.E. Moore)和谢弗-兰道(Russ Shafer-Landau)</div><div class="thb" style="top:61.8px;left:10px;font-size:3.2px;color:#2b2b2b">&nbsp;等人。</div></div></div>
<div class="num" style="top:916.8px">9</div>
<div class="thf" style="top:917.1px"><div class="ths"><div class="tht" style="font-size:6.7px">实在论的新的分类</div><div class="thb" style="top:20.6px;left:10px;font-size:4.0px;color:#2b2b2b">•道德实在论也可以分为<span class="red">以行动为中心的道德实在论</span>和道德实在论</div><div class="thb" style="top:24.1px;left:10px;font-size:4.0px;color:#2b2b2b">&nbsp;和<span class="red">以行动者为中心的</span>的道德实在论。</div><div class="thb" style="top:29.9px;left:10px;font-size:4.0px;color:#2b2b2b"><span class="red">•以行动为中心的实在论</span>关注的是道德命题所使用的谓词和由此表达</div><div class="thb" style="top:33.7px;left:10px;font-size:4.0px;color:#2b2b2b">&nbsp;的道德事实的客观性。<span class="red">以行动者为中心的</span>…</div></div></div>

<div id="stage"></div>
<div class="a" style="left:433.4px;top:268.4px;width:971.6px;height:546.2px;box-shadow:0 1px 5px rgba(0,0,0,.25)"></div>
<svg class="a" style="left:433.4px;top:268.4px" width="971.6" height="546.2" viewBox="0 0 970 545.3" preserveAspectRatio="none">
<defs><linearGradient id="bgg" x1="0" y1="0" x2="0" y2="1"><stop offset="0" stop-color="#88afbb"/><stop offset="0.55" stop-color="#82a9b5"/><stop offset="1" stop-color="#76a0ab"/></linearGradient>
<linearGradient id="shade" x1="0" y1="0" x2="0" y2="1"><stop offset="0" stop-color="#000" stop-opacity="0"/><stop offset="0.5" stop-color="#000" stop-opacity="0"/><stop offset="1" stop-color="#3a3020" stop-opacity="0.10"/></linearGradient></defs>
<rect width="970" height="546" fill="url(#bgg)"/>
<rect width="970" height="546" fill="url(#pat)"/>
<rect width="970" height="546" fill="url(#shade)"/>
<rect x="103" y="100.700" width="764.200" height="344" fill="#000" opacity="0.10"/>
<rect x="103.900" y="101.500" width="762.400" height="342.200" fill="#fdfdfc"/>
<rect x="117" y="113.400" width="737.400" height="319.800" fill="#f8f7f5" stroke="#6a6a6a" stroke-width="1.400"/>
<rect x="408.900" y="101.500" width="150.800" height="57.200" fill="#dedcd5"/>
<path d="M417.400 101.500V152.800H552.400V101.500" fill="#ddd9ce" stroke="#3a362e" stroke-width="1.800"/>
<g font-family="'Liberation Serif','Noto Serif CJK SC',serif" fill="#262626" text-anchor="middle">
<text x="470" y="260" font-size="48" font-weight="500">道德实在论:</text>
<text x="485.600" y="308.600" font-size="48" font-weight="500">朱熹美德伦理学的进路</text>
<text x="381" y="394.600" font-size="19.200" font-weight="500">黄勇</text>
<text x="520.500" y="394.600" font-size="19.200" font-weight="500">香港中文大学哲学系</text>
</g>
</svg>
<svg class="a" style="left:790px;top:172px" width="24" height="28" viewBox="790 172 24 28"><path d="M797.2 178.8V190.6L800 188L802.5 193.8L804.8 192.8L802.3 187.2H806.2Z" fill="#0a0a0a" stroke="#f4f4f4" stroke-width="0.9"/></svg>


<div class="a" style="left:402.5px;top:956.6px;width:1034.2px;height:4px;background:#fafafa;border-top:1px solid #dcdcdc"></div>
<div id="status"></div>
<div class="st" style="left:264px">1 of 84</div>
<div class="st" style="left:330px">English (United States)</div>
<div class="st" style="left:898px">Notes</div>
<div class="st" style="left:976px">Comments</div>
<div class="st" style="left:1344px">93%</div>
<svg class="a" style="left:203px;top:962px" width="1233" height="25" viewBox="203 962 1233 25">
<path d="M886 966.800l4.200 3.700h-8.400z" fill="#555555"/><path d="M879.500 972.500h13M879.500 975.500h13M879.500 978.500h9" stroke="#555555" stroke-width="1.200"/>
<path d="M957.500 967.500h13.500v8.500h-8l-3 3v-3h-2.500z" fill="#555555"/>
<rect x="1055" y="962.500" width="39.500" height="24.500" fill="#b3b3b3"/>
<rect x="1068.500" y="967.300" width="13.800" height="12" fill="none" stroke="#fbfbfb" stroke-width="1.600"/><rect x="1067" y="966.500" width="3.500" height="13.600" fill="#fbfbfb"/><rect x="1072.500" y="970" width="7" height="4" fill="#fbfbfb"/><path d="M1072.500 976.500h7" stroke="#fbfbfb" stroke-width="1"/>
<rect x="1105.7" y="967.8" width="7.200" height="4.800" rx="0.800" fill="#555555"/>
<rect x="1115.5" y="967.8" width="7.200" height="4.800" rx="0.800" fill="#555555"/>
<rect x="1105.7" y="975.5" width="7.200" height="4.800" rx="0.800" fill="#555555"/>
<rect x="1115.5" y="975.5" width="7.200" height="4.800" rx="0.800" fill="#555555"/>
<rect x="1146.800" y="968" width="14" height="8" fill="none" stroke="#555555" stroke-width="1.400"/><path d="M1145.500 967.500h16.500" stroke="#555555" stroke-width="1.600"/><path d="M1153.800 976v3M1150 980.300h7.600" stroke="#555555" stroke-width="1.400"/><rect x="1150" y="970.500" width="7.500" height="3" fill="#9a9a9a"/>
<path d="M1182 973.500h8.500" stroke="#555555" stroke-width="1.700"/>
<rect x="1199.500" y="972" width="107.500" height="3.200" rx="1.600" fill="#b9b9b9"/>
<circle cx="1249.500" cy="973.500" r="6.300" fill="#fdfdfd" stroke="#c6c6c6" stroke-width="0.800"/>
<path d="M1316.300 973.500h8.800M1320.700 969.100v8.800" stroke="#555555" stroke-width="1.700"/>
<rect x="1396.200" y="966.800" width="13.200" height="13.400" rx="1.200" fill="none" stroke="#555555" stroke-width="1.400"/>
<path d="M1402.800 968.500v3M1402.800 978.500v-3M1397.800 973.500h3M1407.800 973.500h-3" stroke="#555555" stroke-width="1.100"/><path d="M1401.600 970.800h2.400l-1.200 1.600zM1401.600 976.200h2.400l-1.200-1.600zM1400 972.300v2.400l1.600-1.200zM1405.600 972.300v2.400l-1.600-1.200z" fill="#555555"/>
</svg>
</div>
<div class="a" style="left:0;top:956px;width:262.500px;height:31px;background:#070707"></div>
<svg class="a" style="left:0;top:956px" width="48" height="31" viewBox="0 956 48 31">
<rect x="4.200" y="962.500" width="17.600" height="12.600" rx="2" fill="#f4f4f4"/><path d="M9.500 977.500h7l1.500 2.500h-10z" fill="#f4f4f4"/><path d="M8 972.500c0.500-4 3-6 6.500-6v-2.500l5 4.200l-5 4.200v-2.500c-3 0-5 0.800-6.500 2.600z" fill="#1a1a1a"/>
<defs><linearGradient id="mic2" x1="0" y1="0" x2="0" y2="1"><stop offset="0" stop-color="#eefaea"/><stop offset="0.400" stop-color="#9be58c"/><stop offset="1" stop-color="#38c634"/></linearGradient></defs>
<rect x="29" y="961.500" width="8" height="12.500" rx="4" fill="url(#mic2)"/><path d="M26 969c0 9.300 14 9.300 14 0" fill="none" stroke="#f2f2f2" stroke-width="1.700"/><path d="M33 976.500v3.500" stroke="#f2f2f2" stroke-width="1.800"/>
</svg>
<div class="a" style="left:44px;top:957px;font-size:21px;line-height:30px;color:#fff;white-space:nowrap;font-family:'Liberation Sans','Noto Sans CJK SC',sans-serif">HuangYong的屏幕共享</div>
<div class="a" style="left:3px;top:794px;width:45px;height:37px;background:#28292c;border-radius:4px"></div>
<svg class="a" style="left:3px;top:794px" width="45" height="37" viewBox="3 794 45 37"><g stroke="#8e8f93" stroke-width="1.700" stroke-linecap="round"><path d="M22 805.500h13M24.500 812.500h10.500M22 819.500h13"/></g><g fill="#8e8f93"><circle cx="17" cy="805.500" r="1.200"/><circle cx="20" cy="812.500" r="1.200"/><circle cx="17" cy="819.500" r="1.200"/></g></svg><div class="a" style="left:1646px;top:416.500px;width:263.500px;height:149.500px;border:2px solid #21a565;border-radius:5px;background:#0a0d0c"></div>
<svg class="a" style="left:1650.500px;top:420px" width="254.500" height="142.500" viewBox="0 0 254 142" preserveAspectRatio="none">
<defs>
<linearGradient id="sky" x1="0" y1="0" x2="0" y2="1"><stop offset="0" stop-color="#2f7ed2"/><stop offset="0.350" stop-color="#4b93da"/><stop offset="0.700" stop-color="#8dbbe4"/><stop offset="1" stop-color="#c4dbec"/></linearGradient>
<linearGradient id="sea" x1="0" y1="0" x2="0" y2="1"><stop offset="0" stop-color="#7fb0d2"/><stop offset="0.600" stop-color="#6ba4c8"/><stop offset="1" stop-color="#9cc3db"/></linearGradient>
<filter id="b1" x="-10%" y="-10%" width="120%" height="120%"><feGaussianBlur stdDeviation="1.600"/></filter>
<filter id="b2" x="-10%" y="-10%" width="120%" height="120%"><feGaussianBlur stdDeviation="0.800"/></filter>
<filter id="b3" x="-20%" y="-20%" width="140%" height="140%"><feGaussianBlur stdDeviation="3"/></filter>
<clipPath id="vc"><rect width="254" height="142"/></clipPath>
</defs>
<g clip-path="url(#vc)">
<rect width="254" height="86" fill="url(#sky)"/>
<rect y="84" width="254" height="58" fill="url(#sea)"/>
<g filter="url(#b1)" fill="#f4f8fc">
<path d="M76 0h40l2 8l-8 6l6 8l-4 10l-10 6l8 8l-6 6l-20-10l-18-8l-6-10l14-10l10-6l-6-8z"/>
<path d="M-4 46c6-6 14-6 20-2c6-6 16-4 20 2c10-4 20 2 26 10c10 2 18 8 22 22h-88z"/>
<path d="M143 50c10-6 22 0 26 12c6 6 8 14 6 24h-34z"/>
<ellipse cx="40" cy="70" rx="46" ry="10" fill="#e3edf6"/>
</g>
<g filter="url(#b2)"><path d="M0 77c10 1 20 2 34 2c14 1 30-1 58 3v5h-92z" fill="#5d88b2"/><path d="M12 91c8-4 20-7 30-5c6 1 10 3 12 5c-12 2-30 2-42 0z" fill="#4b7692"/><path d="M41 95c4-2 10-2 14 0c-3 2-10 2-14 0z" fill="#446d86"/>
<path d="M0 106c20-2 50-3 70-1l30 3v8h-100z" fill="#c9dce8" opacity="0.900"/><path d="M0 112h100v14h-100z" fill="#b5cfe0" opacity="0.850"/></g>
<g filter="url(#b2)">
<path d="M147 36c2-12 10-22 20-30l4-6h83v96h-72c-4-12-8-22-14-32c-6-8-16-16-21-28z" fill="#4f6646" opacity="0.700"/>
<ellipse cx="196" cy="52" rx="8.2" ry="6.4" fill="#7d9470" opacity="0.90"/><ellipse cx="198" cy="57" rx="4.8" ry="3.8" fill="#354b31" opacity="0.63"/><ellipse cx="234" cy="65" rx="4.2" ry="4.2" fill="#3f4735" opacity="0.83"/><ellipse cx="213" cy="13" rx="4.1" ry="3.3" fill="#46603f" opacity="0.61"/><ellipse cx="241" cy="56" rx="7.5" ry="5.5" fill="#667f55" opacity="0.78"/><ellipse cx="216" cy="46" rx="7.0" ry="5.5" fill="#2b3d2b" opacity="0.74"/><ellipse cx="206" cy="87" rx="4.4" ry="3.1" fill="#667f55" opacity="0.78"/><ellipse cx="179" cy="4" rx="4.1" ry="3.6" fill="#667f55" opacity="0.67"/><ellipse cx="244" cy="43" rx="8.4" ry="6.4" fill="#566f48" opacity="0.80"/><ellipse cx="169" cy="63" rx="5.5" ry="4.0" fill="#46603f" opacity="0.94"/><ellipse cx="228" cy="9" rx="5.1" ry="3.3" fill="#46603f" opacity="0.76"/><ellipse cx="200" cy="63" rx="4.8" ry="3.9" fill="#354b31" opacity="0.75"/><ellipse cx="189" cy="36" rx="8.5" ry="5.1" fill="#2b3d2b" opacity="0.95"/><ellipse cx="254" cy="56" rx="6.6" ry="4.1" fill="#354b31" opacity="0.67"/><ellipse cx="175" cy="72" rx="5.5" ry="3.9" fill="#566f48" opacity="0.63"/><ellipse cx="170" cy="59" rx="4.1" ry="3.0" fill="#3f4735" opacity="0.64"/><ellipse cx="210" cy="78" rx="4.6" ry="3.5" fill="#354b31" opacity="0.71"/><ellipse cx="172" cy="57" rx="7.3" ry="4.8" fill="#7d9470" opacity="0.67"/><ellipse cx="249" cy="83" rx="6.7" ry="5.2" fill="#566f48" opacity="0.64"/><ellipse cx="202" cy="22" rx="7.3" ry="5.5" fill="#4e563a" opacity="0.89"/><ellipse cx="211" cy="26" rx="4.8" ry="4.3" fill="#566f48" opacity="0.64"/><ellipse cx="199" cy="61" rx="6.8" ry="4.3" fill="#667f55" opacity="0.92"/><ellipse cx="170" cy="-0" rx="5.2" ry="4.1" fill="#46603f" opacity="0.62"/><ellipse cx="178" cy="49" rx="8.4" ry="5.3" fill="#354b31" opacity="0.91"/><ellipse cx="252" cy="61" rx="7.1" ry="5.9" fill="#354b31" opacity="0.81"/><ellipse cx="246" cy="44" rx="5.6" ry="4.1" fill="#46603f" opacity="0.61"/><ellipse cx="215" cy="44" rx="7.3" ry="5.3" fill="#566f48" opacity="0.63"/><ellipse cx="206" cy="69" rx="8.1" ry="7.2" fill="#354b31" opacity="0.88"/><ellipse cx="245" cy="32" rx="7.1" ry="6.8" fill="#4e563a" opacity="0.93"/><ellipse cx="188" cy="-1" rx="4.3" ry="2.8" fill="#566f48" opacity="0.95"/><ellipse cx="241" cy="68" rx="5.7" ry="5.1" fill="#3f4735" opacity="0.75"/><ellipse cx="237" cy="6" rx="7.4" ry="4.5" fill="#566f48" opacity="0.77"/><ellipse cx="172" cy="65" rx="6.2" ry="5.3" fill="#3f4735" opacity="0.69"/><ellipse cx="220" cy="17" rx="4.8" ry="4.6" fill="#3f4735" opacity="0.77"/><ellipse cx="174" cy="37" rx="5.1" ry="4.4" fill="#667f55" opacity="0.91"/><ellipse cx="189" cy="54" rx="5.4" ry="3.5" fill="#3f4735" opacity="0.72"/><ellipse cx="243" cy="2" rx="4.3" ry="4.3" fill="#354b31" opacity="0.64"/><ellipse cx="198" cy="87" rx="7.7" ry="5.8" fill="#7d9470" opacity="0.77"/><ellipse cx="181" cy="79" rx="8.4" ry="6.6" fill="#566f48" opacity="0.89"/><ellipse cx="177" cy="56" rx="7.1" ry="5.0" fill="#748d62" opacity="0.71"/><ellipse cx="232" cy="-0" rx="4.6" ry="3.6" fill="#46603f" opacity="0.87"/><ellipse cx="176" cy="73" rx="7.6" ry="7.5" fill="#566f48" opacity="0.76"/><ellipse cx="215" cy="61" rx="7.6" ry="7.5" fill="#667f55" opacity="0.67"/><ellipse cx="198" cy="15" rx="4.0" ry="3.2" fill="#46603f" opacity="0.66"/><ellipse cx="177" cy="31" rx="7.1" ry="5.8" fill="#354b31" opacity="0.74"/><ellipse cx="232" cy="85" rx="4.4" ry="4.3" fill="#4e563a" opacity="0.65"/><ellipse cx="196" cy="58" rx="8.1" ry="6.1" fill="#7d9470" opacity="0.88"/><ellipse cx="248" cy="43" rx="6.9" ry="4.7" fill="#566f48" opacity="0.67"/><ellipse cx="243" cy="92" rx="8.4" ry="6.8" fill="#748d62" opacity="0.69"/><ellipse cx="224" cy="-0" rx="6.3" ry="3.9" fill="#748d62" opacity="0.79"/><ellipse cx="229" cy="45" rx="4.1" ry="3.8" fill="#566f48" opacity="0.75"/><ellipse cx="221" cy="86" rx="6.1" ry="6.1" fill="#7d9470" opacity="0.89"/><ellipse cx="221" cy="89" rx="6.2" ry="6.1" fill="#566f48" opacity="0.87"/><ellipse cx="195" cy="52" rx="7.7" ry="6.4" fill="#354b31" opacity="0.78"/><ellipse cx="237" cy="52" rx="5.4" ry="4.1" fill="#667f55" opacity="0.71"/><ellipse cx="163" cy="50" rx="5.2" ry="4.2" fill="#4e563a" opacity="0.79"/><ellipse cx="201" cy="56" rx="4.1" ry="4.1" fill="#7d9470" opacity="0.92"/><ellipse cx="206" cy="93" rx="4.5" ry="2.9" fill="#354b31" opacity="0.62"/><ellipse cx="205" cy="38" rx="8.3" ry="8.1" fill="#2b3d2b" opacity="0.69"/><ellipse cx="200" cy="31" rx="8.1" ry="7.8" fill="#3f4735" opacity="0.78"/><ellipse cx="160" cy="38" rx="4.1" ry="2.9" fill="#46603f" opacity="0.61"/><ellipse cx="178" cy="67" rx="5.1" ry="4.1" fill="#3f4735" opacity="0.86"/><ellipse cx="161" cy="47" rx="5.1" ry="3.5" fill="#7d9470" opacity="0.91"/><ellipse cx="235" cy="57" rx="6.4" ry="6.1" fill="#7d9470" opacity="0.82"/><ellipse cx="204" cy="80" rx="6.8" ry="6.4" fill="#667f55" opacity="0.92"/><ellipse cx="215" cy="31" rx="4.8" ry="4.1" fill="#667f55" opacity="0.68"/><ellipse cx="254" cy="83" rx="4.6" ry="3.2" fill="#566f48" opacity="0.69"/><ellipse cx="193" cy="74" rx="4.6" ry="3.5" fill="#46603f" opacity="0.63"/><ellipse cx="208" cy="32" rx="7.7" ry="5.7" fill="#7d9470" opacity="0.82"/><ellipse cx="184" cy="94" rx="7.7" ry="7.1" fill="#3f4735" opacity="0.64"/><ellipse cx="203" cy="53" rx="4.7" ry="3.1" fill="#667f55" opacity="0.66"/><ellipse cx="165" cy="25" rx="7.0" ry="5.8" fill="#354b31" opacity="0.93"/><ellipse cx="197" cy="71" rx="5.5" ry="4.3" fill="#7d9470" opacity="0.72"/><ellipse cx="170" cy="34" rx="6.9" ry="4.2" fill="#667f55" opacity="0.66"/><ellipse cx="196" cy="69" rx="5.8" ry="3.9" fill="#354b31" opacity="0.63"/><ellipse cx="232" cy="29" rx="4.4" ry="4.1" fill="#4e563a" opacity="0.80"/><ellipse cx="168" cy="54" rx="5.5" ry="5.0" fill="#2b3d2b" opacity="0.92"/><ellipse cx="227" cy="73" rx="7.7" ry="5.8" fill="#748d62" opacity="0.91"/><ellipse cx="222" cy="72" rx="7.4" ry="5.7" fill="#354b31" opacity="0.62"/><ellipse cx="184" cy="43" rx="4.0" ry="3.0" fill="#46603f" opacity="0.68"/><ellipse cx="248" cy="62" rx="5.5" ry="4.8" fill="#354b31" opacity="0.79"/><ellipse cx="189" cy="94" rx="6.9" ry="6.1" fill="#4e563a" opacity="0.94"/><ellipse cx="226" cy="23" rx="5.8" ry="3.6" fill="#667f55" opacity="0.83"/><ellipse cx="177" cy="31" rx="6.4" ry="4.9" fill="#7d9470" opacity="0.80"/><ellipse cx="253" cy="59" rx="7.6" ry="4.8" fill="#46603f" opacity="0.74"/><ellipse cx="247" cy="35" rx="8.4" ry="7.9" fill="#7d9470" opacity="0.81"/><ellipse cx="193" cy="49" rx="6.7" ry="5.0" fill="#2b3d2b" opacity="0.77"/><ellipse cx="177" cy="87" rx="7.0" ry="6.3" fill="#46603f" opacity="0.60"/><ellipse cx="174" cy="2" rx="4.7" ry="4.2" fill="#4e563a" opacity="0.62"/><ellipse cx="181" cy="36" rx="6.6" ry="5.9" fill="#748d62" opacity="0.63"/><ellipse cx="244" cy="39" rx="6.1" ry="6.1" fill="#667f55" opacity="0.62"/><ellipse cx="244" cy="12" rx="8.3" ry="5.8" fill="#566f48" opacity="0.62"/><ellipse cx="192" cy="9" rx="7.9" ry="5.8" fill="#354b31" opacity="0.64"/><ellipse cx="195" cy="62" rx="6.0" ry="4.3" fill="#4e563a" opacity="0.73"/><ellipse cx="227" cy="76" rx="4.6" ry="3.3" fill="#354b31" opacity="0.68"/><ellipse cx="231" cy="58" rx="5.6" ry="4.0" fill="#667f55" opacity="0.82"/><ellipse cx="228" cy="16" rx="5.1" ry="5.1" fill="#667f55" opacity="0.91"/><ellipse cx="177" cy="39" rx="6.8" ry="4.4" fill="#7d9470" opacity="0.70"/><ellipse cx="228" cy="86" rx="4.7" ry="3.3" fill="#748d62" opacity="0.77"/><ellipse cx="186" cy="30" rx="6.2" ry="4.1" fill="#566f48" opacity="0.88"/><ellipse cx="195" cy="77" rx="7.8" ry="7.1" fill="#3f4735" opacity="0.75"/><ellipse cx="175" cy="76" rx="5.7" ry="4.9" fill="#748d62" opacity="0.70"/><ellipse cx="228" cy="77" rx="4.8" ry="4.2" fill="#566f48" opacity="0.76"/><ellipse cx="182" cy="50" rx="5.9" ry="4.9" fill="#3f4735" opacity="0.70"/><ellipse cx="230" cy="5" rx="5.0" ry="4.3" fill="#566f48" opacity="0.84"/><ellipse cx="200" cy="71" rx="5.5" ry="5.2" fill="#667f55" opacity="0.73"/><ellipse cx="225" cy="33" rx="4.5" ry="4.0" fill="#2b3d2b" opacity="0.75"/><ellipse cx="233" cy="27" rx="5.4" ry="4.1" fill="#7d9470" opacity="0.69"/><ellipse cx="186" cy="33" rx="5.6" ry="4.3" fill="#4e563a" opacity="0.88"/><ellipse cx="226" cy="33" rx="5.8" ry="3.8" fill="#354b31" opacity="0.66"/><ellipse cx="228" cy="83" rx="5.3" ry="3.2" fill="#7d9470" opacity="0.62"/><ellipse cx="165" cy="26" rx="4.1" ry="3.8" fill="#4e563a" opacity="0.62"/><ellipse cx="206" cy="74" rx="4.4" ry="2.8" fill="#566f48" opacity="0.91"/><ellipse cx="217" cy="22" rx="5.0" ry="4.5" fill="#7d9470" opacity="0.72"/><ellipse cx="197" cy="32" rx="7.6" ry="5.6" fill="#354b31" opacity="0.77"/><ellipse cx="205" cy="67" rx="7.2" ry="6.9" fill="#4e563a" opacity="0.86"/><ellipse cx="252" cy="32" rx="4.0" ry="3.0" fill="#566f48" opacity="0.91"/><ellipse cx="250" cy="59" rx="6.4" ry="5.6" fill="#566f48" opacity="0.75"/><ellipse cx="193" cy="12" rx="7.3" ry="7.3" fill="#4e563a" opacity="0.84"/><ellipse cx="182" cy="35" rx="6.4" ry="4.5" fill="#46603f" opacity="0.77"/><ellipse cx="225" cy="27" rx="4.7" ry="4.5" fill="#46603f" opacity="0.86"/><ellipse cx="233" cy="28" rx="4.9" ry="3.6" fill="#667f55" opacity="0.81"/><ellipse cx="198" cy="47" rx="6.0" ry="5.7" fill="#4e563a" opacity="0.66"/><ellipse cx="228" cy="28" rx="6.5" ry="6.0" fill="#3f4735" opacity="0.90"/><ellipse cx="199" cy="37" rx="8.3" ry="7.2" fill="#566f48" opacity="0.77"/><ellipse cx="171" cy="3" rx="8.3" ry="7.6" fill="#4e563a" opacity="0.94"/><ellipse cx="232" cy="72" rx="7.5" ry="4.7" fill="#667f55" opacity="0.91"/><ellipse cx="241" cy="85" rx="6.0" ry="4.2" fill="#4e563a" opacity="0.81"/><ellipse cx="165" cy="13" rx="5.4" ry="3.8" fill="#7d9470" opacity="0.65"/><ellipse cx="227" cy="57" rx="6.3" ry="3.9" fill="#354b31" opacity="0.60"/><ellipse cx="235" cy="79" rx="7.7" ry="4.9" fill="#2b3d2b" opacity="0.82"/><ellipse cx="204" cy="83" rx="7.1" ry="4.5" fill="#7d9470" opacity="0.90"/><ellipse cx="180" cy="74" rx="5.9" ry="5.7" fill="#566f48" opacity="0.87"/><ellipse cx="195" cy="2" rx="5.9" ry="4.7" fill="#2b3d2b" opacity="0.71"/><ellipse cx="191" cy="51" rx="8.5" ry="7.4" fill="#566f48" opacity="0.73"/><ellipse cx="221" cy="8" rx="5.8" ry="4.5" fill="#566f48" opacity="0.83"/><ellipse cx="149" cy="34" rx="7.2" ry="5.0" fill="#566f48" opacity="0.76"/><ellipse cx="233" cy="18" rx="6.8" ry="4.9" fill="#4e563a" opacity="0.93"/><ellipse cx="227" cy="90" rx="7.4" ry="6.1" fill="#566f48" opacity="0.69"/><ellipse cx="169" cy="68" rx="5.5" ry="5.4" fill="#3f4735" opacity="0.85"/><ellipse cx="183" cy="77" rx="4.4" ry="2.9" fill="#566f48" opacity="0.65"/><ellipse cx="215" cy="15" rx="4.9" ry="3.0" fill="#3f4735" opacity="0.81"/><ellipse cx="158" cy="20" rx="4.7" ry="3.1" fill="#4e563a" opacity="0.87"/><ellipse cx="184" cy="77" rx="8.2" ry="5.4" fill="#667f55" opacity="0.87"/><ellipse cx="235" cy="35" rx="5.5" ry="4.2" fill="#46603f" opacity="0.85"/><ellipse cx="213" cy="28" rx="7.5" ry="5.3" fill="#7d9470" opacity="0.61"/><ellipse cx="183" cy="31" rx="6.9" ry="4.5" fill="#4e563a" opacity="0.67"/><ellipse cx="183" cy="26" rx="4.5" ry="4.0" fill="#2b3d2b" opacity="0.87"/><ellipse cx="244" cy="51" rx="5.6" ry="4.5" fill="#354b31" opacity="0.80"/><ellipse cx="254" cy="66" rx="8.2" ry="6.8" fill="#46603f" opacity="0.82"/><ellipse cx="169" cy="6" rx="5.1" ry="4.2" fill="#748d62" opacity="0.72"/><ellipse cx="246" cy="33" rx="6.1" ry="4.0" fill="#354b31" opacity="0.68"/><ellipse cx="208" cy="50" rx="4.3" ry="4.1" fill="#354b31" opacity="0.92"/><ellipse cx="253" cy="76" rx="6.7" ry="4.4" fill="#46603f" opacity="0.70"/><ellipse cx="243" cy="21" rx="6.6" ry="6.1" fill="#354b31" opacity="0.81"/><ellipse cx="234" cy="42" rx="5.8" ry="5.3" fill="#354b31" opacity="0.71"/><ellipse cx="219" cy="69" rx="5.7" ry="4.8" fill="#46603f" opacity="0.66"/><ellipse cx="192" cy="1" rx="6.4" ry="4.1" fill="#4e563a" opacity="0.66"/><ellipse cx="203" cy="23" rx="6.6" ry="4.8" fill="#46603f" opacity="0.85"/><ellipse cx="231" cy="37" rx="6.2" ry="4.0" fill="#748d62" opacity="0.74"/><ellipse cx="214" cy="64" rx="7.4" ry="6.7" fill="#3f4735" opacity="0.91"/><ellipse cx="197" cy="85" rx="7.1" ry="6.6" fill="#566f48" opacity="0.80"/><ellipse cx="244" cy="48" rx="6.4" ry="4.9" fill="#46603f" opacity="0.71"/><ellipse cx="243" cy="68" rx="6.7" ry="6.0" fill="#2b3d2b" opacity="0.91"/><ellipse cx="241" cy="21" rx="7.8" ry="5.4" fill="#4e563a" opacity="0.94"/><ellipse cx="198" cy="8" rx="8.1" ry="6.6" fill="#4e563a" opacity="0.93"/><ellipse cx="241" cy="94" rx="7.3" ry="6.9" fill="#748d62" opacity="0.90"/><ellipse cx="193" cy="75" rx="5.0" ry="4.5" fill="#566f48" opacity="0.92"/><ellipse cx="161" cy="50" rx="8.3" ry="5.0" fill="#667f55" opacity="0.85"/><ellipse cx="195" cy="41" rx="6.4" ry="4.2" fill="#667f55" opacity="0.62"/><ellipse cx="181" cy="46" rx="8.2" ry="8.1" fill="#3f4735" opacity="0.91"/><ellipse cx="221" cy="4" rx="5.4" ry="5.1" fill="#3f4735" opacity="0.61"/><ellipse cx="215" cy="65" rx="6.5" ry="5.3" fill="#667f55" opacity="0.67"/><ellipse cx="241" cy="3" rx="4.5" ry="4.0" fill="#748d62" opacity="0.94"/><ellipse cx="177" cy="38" rx="8.0" ry="5.8" fill="#3f4735" opacity="0.75"/><ellipse cx="177" cy="67" rx="6.3" ry="4.5" fill="#2b3d2b" opacity="0.73"/><ellipse cx="218" cy="83" rx="6.7" ry="4.6" fill="#2b3d2b" opacity="0.91"/><ellipse cx="167" cy="20" rx="4.6" ry="4.0" fill="#3f4735" opacity="0.94"/><ellipse cx="195" cy="49" rx="6.4" ry="3.9" fill="#2b3d2b" opacity="0.79"/><ellipse cx="193" cy="53" rx="4.7" ry="4.7" fill="#667f55" opacity="0.69"/><ellipse cx="178" cy="51" rx="4.8" ry="4.6" fill="#46603f" opacity="0.82"/><ellipse cx="245" cy="54" rx="4.0" ry="3.8" fill="#46603f" opacity="0.66"/><ellipse cx="207" cy="60" rx="5.6" ry="4.9" fill="#46603f" opacity="0.78"/><ellipse cx="202" cy="79" rx="7.1" ry="5.7" fill="#7d9470" opacity="0.66"/><ellipse cx="231" cy="14" rx="6.7" ry="4.7" fill="#3f4735" opacity="0.79"/><ellipse cx="175" cy="67" rx="7.2" ry="5.1" fill="#7d9470" opacity="0.68"/><ellipse cx="209" cy="46" rx="4.2" ry="3.5" fill="#46603f" opacity="0.80"/><ellipse cx="241" cy="15" rx="4.7" ry="2.8" fill="#3f4735" opacity="0.88"/><ellipse cx="201" cy="67" rx="7.9" ry="4.8" fill="#566f48" opacity="0.92"/><ellipse cx="208" cy="50" rx="7.6" ry="5.3" fill="#354b31" opacity="0.62"/><ellipse cx="193" cy="65" rx="7.7" ry="6.9" fill="#2b3d2b" opacity="0.87"/><ellipse cx="201" cy="60" rx="6.3" ry="4.7" fill="#667f55" opacity="0.66"/><ellipse cx="221" cy="78" rx="7.5" ry="4.7" fill="#4e563a" opacity="0.76"/><ellipse cx="222" cy="66" rx="8.3" ry="5.4" fill="#354b31" opacity="0.65"/><ellipse cx="196" cy="70" rx="4.2" ry="2.9" fill="#7d9470" opacity="0.65"/><ellipse cx="190" cy="27" rx="5.9" ry="3.7" fill="#46603f" opacity="0.84"/><ellipse cx="224" cy="92" rx="6.8" ry="4.9" fill="#566f48" opacity="0.79"/><ellipse cx="174" cy="42" rx="8.2" ry="6.1" fill="#748d62" opacity="0.93"/><ellipse cx="246" cy="19" rx="4.7" ry="3.9" fill="#46603f" opacity="0.86"/><ellipse cx="208" cy="86" rx="8.0" ry="7.7" fill="#354b31" opacity="0.76"/>
<path d="M178 96c-2-14-8-26-16-36c-6-8-12-16-14-26" fill="none" stroke="#4a4034" stroke-width="2.200"/><path d="M186 96c0-20-6-40-4-60M196 96c2-24 0-50 6-76M210 96c0-30 4-60 2-90" stroke="#4f4538" stroke-width="1.800" fill="none"/>
<path d="M222 0h32v96h-24c-2-30-2-64-8-96z" fill="#3a342b" opacity="0.880"/><path d="M232 4c2 30 0 60 4 92M243 2c2 30 0 62 3 94" stroke="#625646" stroke-width="2.200" fill="none"/>
</g>
<g filter="url(#b2)"><path d="M176 96c20-6 50-6 78-2v48h-78z" fill="#3b4a63"/><path d="M182 93c16-3 36-4 50-2l22 3v8c-24-4-50-4-72-1z" fill="#8d8188"/><path d="M190 104v38M204 106v36M218 104v38M232 106v36M244 104v38" stroke="#59677f" stroke-width="2" opacity="0.700"/><path d="M176 100c20-4 50-4 78 0v5c-28-4-58-4-78 0z" fill="#2e3a55"/></g>
<g filter="url(#b1)">
<path d="M54 142c0-22 14-42 40-48h48c28 6 46 22 50 48z" fill="#e4f3fb"/>
<path d="M58 120c6-14 18-22 36-26l10 12l-40 24z" fill="#2f5fd0"/><path d="M150 96c16 4 28 12 34 22l-26 8z" fill="#2b5bd0"/>
<path d="M100 128h92v14h-92z" fill="#2d58cc"/><path d="M56 132h50v10h-50z" fill="#1e3fa8"/>
<path d="M138 92c8 2 14 8 16 14l-10 12l-12-8z" fill="#2448b8"/>
<ellipse cx="115" cy="54" rx="31" ry="32" fill="#1f1b19"/>
<path d="M89 62c0-16 10-24 26-24c16 0 27 8 27 24c0 22-6 44-12 56c-4 6-22 6-26 0c-8-14-15-36-15-56z" fill="#c9a593"/>
<path d="M104 118c4 8 22 8 26 0l4 12l-16 12l-14-10z" fill="#c29c8b"/>
<ellipse cx="101" cy="69" rx="6" ry="2.600" fill="#5d4238" opacity="0.800"/><ellipse cx="129" cy="69" rx="6" ry="2.600" fill="#5d4238" opacity="0.800"/>
<ellipse cx="116" cy="90" rx="5" ry="6" fill="#d9bba9" opacity="0.900"/>
<ellipse cx="117" cy="103" rx="8" ry="3" fill="#c0606f" opacity="0.850"/>
</g>
<g filter="url(#b2)"><circle cx="200" cy="13.600" r="4.600" fill="#e8743a"/></g>
<g filter="url(#b2)" fill="#f1e9dc" opacity="0.850"><rect x="207" y="9.500" width="27" height="6" rx="1"/><rect x="209" y="16.500" width="22" height="1.800"/></g>
<rect x="0" y="114.500" width="108.500" height="28" fill="#1b2630" opacity="0.860"/>
<defs><linearGradient id="mic" x1="0" y1="0" x2="0" y2="1"><stop offset="0" stop-color="#e9f7e4"/><stop offset="0.350" stop-color="#8fe07f"/><stop offset="1" stop-color="#35c531"/></linearGradient></defs>
<rect x="9.300" y="119.500" width="8.400" height="13" rx="4.200" fill="url(#mic)"/><path d="M6.300 127c0 9.500 14.400 9.500 14.400 0" fill="none" stroke="#f2f2f2" stroke-width="1.700"/><path d="M13.500 134.500v3" stroke="#f2f2f2" stroke-width="1.800"/>
<text x="28.500" y="134.200" font-family="'Liberation Sans',sans-serif" font-size="13.500" font-weight="bold" fill="#fafafa">HuangYong</text>
</g></svg>
<div class="a" style="left:0;top:985.7px;width:1920px;height:1.3px;background:#000"></div><div class="a" style="left:1917.6px;top:0;width:2.4px;height:987px;background:#000"></div>
</body></html>
